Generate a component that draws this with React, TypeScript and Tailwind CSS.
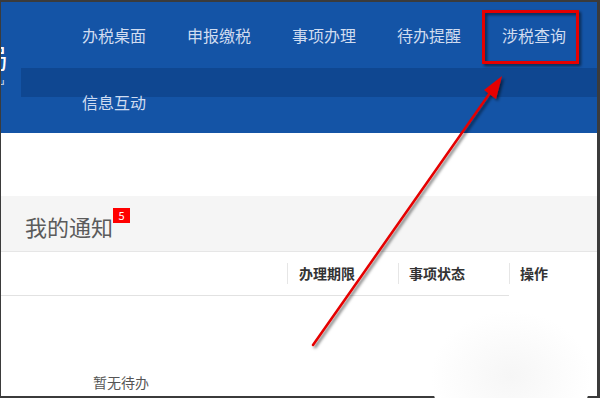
import React from "react";

const navTop = ["办税桌面", "申报缴税", "事项办理", "待办提醒", "涉税查询"];

export default function App() {
  const font = { fontFamily: '"Noto Sans CJK SC", "Microsoft YaHei", sans-serif' };
  return (
    <div
      className="relative w-[600px] h-[398px] overflow-hidden bg-[#3b3b3b] pt-[2px] pl-[1px] pr-[3px] pb-[2px]"
      style={font}
    >
      <div className="flex flex-col w-full h-full bg-white">
        {/* header */}
        <div className="flex h-[131px] bg-[#1454a6]">
          <div className="w-[20px] flex flex-col">
            <div className="mt-[41px] w-[6px] h-[30px] overflow-hidden">
              <div className="-ml-[20px] text-[27px] leading-[30px] text-white">局</div>
            </div>
            <div className="mt-[3px] w-[6px] h-[12px] overflow-hidden">
              <div className="-ml-[2px] text-[9px] leading-[12px] text-[#dfe8f5]">u</div>
            </div>
          </div>
          <div className="flex-1 flex flex-col">
            <div className="h-[66px] flex items-center pl-[61px] gap-[41px]">
              {navTop.map((t) => (
                <span key={t} className="text-[16px] leading-[20px] text-[#d0dcf0] whitespace-nowrap">
                  {t}
                </span>
              ))}
            </div>
            <div className="h-[29px] bg-[#0f4791]" />
            <div className="-mt-[7px] pl-[61px]">
              <span className="text-[16px] leading-[20px] text-[#d0dcf0]">信息互动</span>
            </div>
          </div>
        </div>

        <div className="h-[63px]" />

        {/* notice bar */}
        <div className="h-[56px] bg-[#f5f5f5] border-b border-[#e6e6e6] flex items-start pt-[16px] pl-[24px]">
          <span className="text-[22px] leading-[28px] text-[#5b5b5b]">我的通知</span>
          <span className="-mt-[4px] w-[17px] h-[15px] bg-[#ff0000] text-white text-[11px] leading-[15px] text-center">
            5
          </span>
        </div>

        {/* table header */}
        <div className="flex h-[44px]">
          <div className="w-[508px] flex border-b border-[#e2e2e2]">
            <div className="w-[286px]" />
            <div className="w-[111px] flex items-center">
              <div className="w-px h-[21px] bg-[#e6e6e6]" />
              <span className="pl-[11px] text-[14px] font-bold text-[#333]">办理期限</span>
            </div>
            <div className="w-[111px] flex items-center">
              <div className="w-px h-[21px] bg-[#e6e6e6]" />
              <span className="pl-[10px] text-[14px] font-bold text-[#333]">事项状态</span>
            </div>
          </div>
          <div className="flex-1 flex items-center pb-px">
            <div className="w-px h-[21px] bg-[#e6e6e6]" />
            <span className="pl-[10px] text-[14px] font-bold text-[#333]">操作</span>
          </div>
        </div>

        <div className="flex-1 relative">
          <div className="absolute left-[430px] top-[15px] w-[160px] h-[130px] rounded-full bg-[radial-gradient(closest-side,#f6f6f6,#ffffff)]" />
          <div className="relative pt-[76px] pl-[92px] text-[14px] leading-[20px] text-[#555]">暂无待办</div>
        </div>
      </div>

      {/* annotations */}
      <svg className="absolute inset-0 pointer-events-none" width="600" height="398" viewBox="0 0 600 398">
        <defs>
          <filter id="sh" x="-20%" y="-20%" width="140%" height="140%">
            <feDropShadow dx="2" dy="2" stdDeviation="1.5" floodColor="#000" floodOpacity="0.55" />
          </filter>
        </defs>
        <rect x="483.5" y="11.5" width="94" height="51" fill="none" stroke="#e60000" strokeWidth="3" filter="url(#sh)" />
        <g filter="url(#sh)">
          <line x1="313" y1="345" x2="492" y2="90" stroke="#e60000" strokeWidth="2.5" strokeLinecap="round" />
          <polygon points="502,76 496,99 484,90" fill="#e60000" />
        </g>
      </svg>
    </div>
  );
}
